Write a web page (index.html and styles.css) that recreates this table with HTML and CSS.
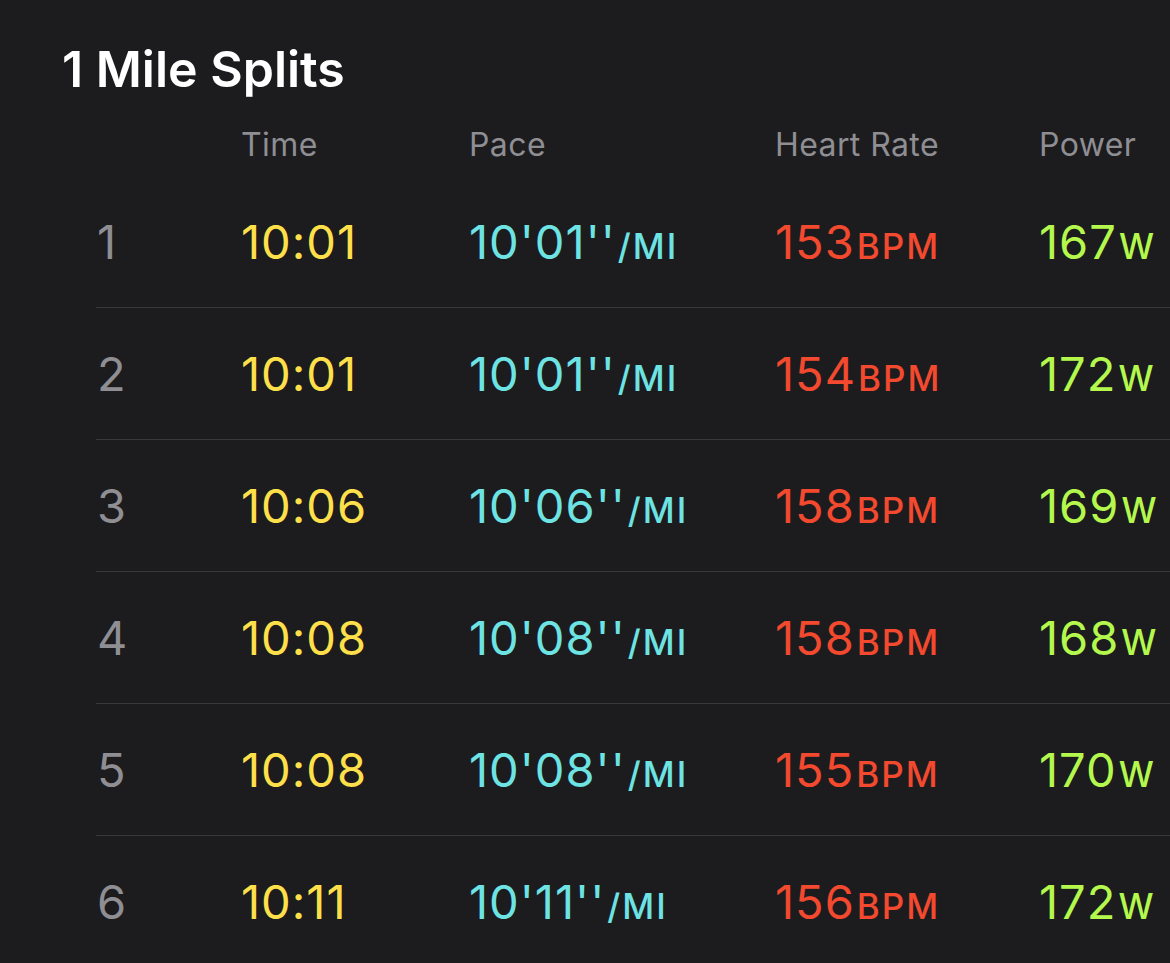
FILE: index.html
```html
<!DOCTYPE html>
<html lang="en">
<head>
<meta charset="utf-8">
<title>1 Mile Splits</title>
<link rel="stylesheet" href="styles.css">
</head>
<body>
<main class="splits">
  <h1 class="title">1 Mile Splits</h1>
  <div class="table">
    <div class="head">
      <span></span>
      <span>Time</span>
      <span>Pace</span>
      <span>Heart Rate</span>
      <span>Power</span>
    </div>
    <div class="row">
      <span class="num">1</span>
      <span class="time">10:01</span>
      <span class="pace">10'01''<span class="unit">/MI</span></span>
      <span class="hr">153<span class="unit">BPM</span></span>
      <span class="power">167<span class="unit">W</span></span>
    </div>
    <div class="row">
      <span class="num">2</span>
      <span class="time">10:01</span>
      <span class="pace">10'01''<span class="unit">/MI</span></span>
      <span class="hr">154<span class="unit">BPM</span></span>
      <span class="power">172<span class="unit">W</span></span>
    </div>
    <div class="row">
      <span class="num">3</span>
      <span class="time">10:06</span>
      <span class="pace">10'06''<span class="unit">/MI</span></span>
      <span class="hr">158<span class="unit">BPM</span></span>
      <span class="power">169<span class="unit">W</span></span>
    </div>
    <div class="row">
      <span class="num">4</span>
      <span class="time">10:08</span>
      <span class="pace">10'08''<span class="unit">/MI</span></span>
      <span class="hr">158<span class="unit">BPM</span></span>
      <span class="power">168<span class="unit">W</span></span>
    </div>
    <div class="row">
      <span class="num">5</span>
      <span class="time">10:08</span>
      <span class="pace">10'08''<span class="unit">/MI</span></span>
      <span class="hr">155<span class="unit">BPM</span></span>
      <span class="power">170<span class="unit">W</span></span>
    </div>
    <div class="row">
      <span class="num">6</span>
      <span class="time">10:11</span>
      <span class="pace">10'11''<span class="unit">/MI</span></span>
      <span class="hr">156<span class="unit">BPM</span></span>
      <span class="power">172<span class="unit">W</span></span>
    </div>
  </div>
</main>
</body>
</html>
```

FILE: styles.css
```css
html, body {
  margin: 0;
  padding: 0;
  background: #1c1c1e;
  overflow: hidden;
}

body {
  font-family: Inter, "Noto Sans", "Liberation Sans", sans-serif;
  color: #ffffff;
}

.splits {
  padding-top: 44px;
}

.title {
  margin: 0 0 0 62px;
  font-size: 50px;
  font-weight: 600;
  line-height: 50px;
  letter-spacing: 0;
}

.table {
  margin-left: 96px;
  margin-top: 35px;
}

.head,
.row {
  display: grid;
  grid-template-columns: 145px 228px 306px 264px 1fr;
  align-items: center;
  white-space: nowrap;
}

.head {
  height: 32px;
  margin-bottom: 15px;
  font-size: 32px;
  line-height: 1;
  letter-spacing: 0.4px;
  color: #8e8e93;
}

.row {
  height: 131px;
  border-bottom: 1px solid #38383a;
  font-size: 47px;
  line-height: 1;
  letter-spacing: 1px;
}

.num {
  color: #8e8e93;
  padding-left: 1px;
  letter-spacing: 0;
}

.time { color: #ffe04a; }
.pace { color: #6ee3e3; }
.hr { color: #f2492f; }
.power { color: #b5f84d; }

.unit {
  font-size: 35px;
  font-weight: 500;
  letter-spacing: 2px;
  margin-left: 2px;
}
```
